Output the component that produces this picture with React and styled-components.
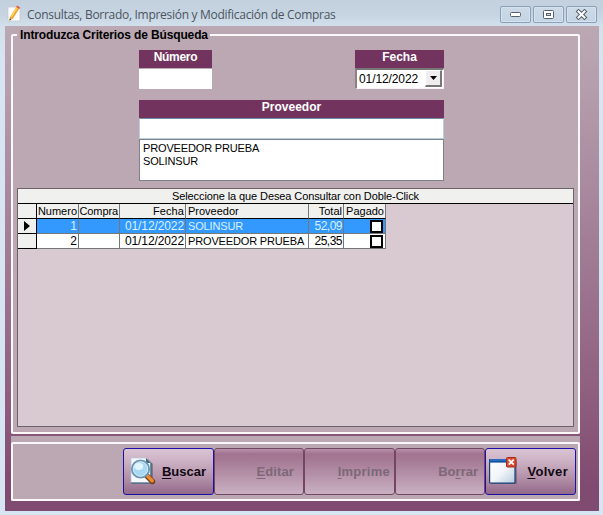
import React from 'react'
import styled, { createGlobalStyle } from 'styled-components'

const GlobalStyle = createGlobalStyle`
	* { box-sizing: border-box; }
	body {
		margin: 0;
		font-family: "Liberation Sans", Arial, sans-serif;
		font-size: 12px;
		color: #000;
		overflow: hidden;
	}
`

const Window = styled.div`
	width: 603px;
	height: 515px;
	padding: 0 4px 4px 5px;
	display: flex;
	flex-direction: column;
	background: linear-gradient(#c3d0de 0px, #c6d4e2 14px, #d2e0ec 26px, #d7e5f2 60px, #d7e5f2);
`

const TitleBar = styled.div`
	height: 26px;
	flex: none;
	display: flex;
	align-items: flex-start;
	padding: 5px 2px 0 2px;
`

const Title = styled.div`
	flex: 1;
	padding: 1px 0 0 6px;
	font-family: "Open Sans", "Noto Sans", sans-serif;
	font-size: 12px;
	line-height: 17px;
	letter-spacing: -0.29px;
	color: #4b5560;
	white-space: nowrap;
`

const WindowButtons = styled.div`
	display: flex;
	gap: 2px;
	padding-top: 1px;
`

const WindowButton = styled.div`
	width: 31px;
	height: 17px;
	display: flex;
	align-items: center;
	justify-content: center;
	border: 1px solid #8aa0b8;
	border-radius: 2px;
	background: linear-gradient(#cddae7, #c5d4e3);
	box-shadow: inset 0 0 0 1px #d6e2ee;
`

const Body = styled.div`
	flex: 1;
	padding: 1px 19px 10px 6px;
	display: flex;
	flex-direction: column;
	background: linear-gradient(#bba8b3 0px, #b59ead 60px, #8c5a7c 390px, #7f4b70 460px);
`

const Criteria = styled.fieldset`
	height: 407px;
	min-width: 0;
	margin: 0 0 2px;
	padding: 0 4px;
	border: 2px solid #fbf8fa;
	border-radius: 2px;
	background: #bba8b3;
`

const Legend = styled.legend`
	height: 16px;
	margin-left: 0;
	padding: 0 2px 0 3px;
	font-weight: bold;
	font-size: 12px;
	line-height: 16px;
	letter-spacing: -0.13px;
	white-space: nowrap;
`

const Fields = styled.div`
	width: 305px;
	height: 138px;
	margin: 7px 0 0 122px;
	display: flex;
	flex-direction: column;
`

const FieldRow = styled.div`
	display: flex;
	justify-content: space-between;
	margin-bottom: 11px;
`

const Field = styled.div`
	width: ${p => p.$width}px;
`

const Label = styled.div`
	height: 18px;
	background: #72345f;
	color: #fff;
	font-weight: bold;
	line-height: 15px;
	text-align: center;
	letter-spacing: ${p => p.$spacing || 0}px;
`

const Input = styled.div`
	height: 21px;
	background: #fff;
	border: 1px solid #b9d0e0;
	border-top-color: #6d8ca6;
`

const PlainInput = styled.div`
	height: 20px;
	margin-top: 1px;
	background: #fff;
`

const DateBox = styled.div`
	height: 21px;
	display: flex;
	justify-content: space-between;
	background: #fff;
	border: 1px solid #f7f3f5;
	border-top: 2px solid #777;
	border-left: 2px solid #8a8088;
	padding: 0 1px 1px 2px;
	line-height: 18px;
	letter-spacing: -0.1px;
`

const DropButton = styled.div`
	width: 17px;
	height: 17px;
	display: flex;
	align-items: center;
	justify-content: center;
	background: #efedee;
	border: 1px solid #fff;
	border-right: 2px solid #777;
	border-bottom: 2px solid #777;
`

const List = styled.div`
	height: 42px;
	padding: 2px 3px;
	background: #fff;
	border: 1px solid #7b828c;
	font-size: 11px;
	line-height: 13px;
	white-space: nowrap;
`

const Item = styled.div`
	letter-spacing: ${p => p.$spacing || 0}px;
`

const Grid = styled.div`
	width: 557px;
	height: 239px;
	background: #d9cad1;
	border: 1px solid #6b6168;
`

const GridCaption = styled.div`
	height: 15px;
	border-bottom: 1px solid #000;
	background: #f0f0ef;
	text-align: center;
	font-size: 11px;
	line-height: 15px;
	letter-spacing: ${p => p.$spacing || 0}px;
`

const Row = styled.div`
	width: 368px;
	height: 15px;
	display: grid;
	grid-template-columns: 19px 42px 41px 66px 123px 35px 42px;
	background: ${p => (p.$head ? '#f0f0ef' : p.$selected ? '#3399ff' : '#fff')};
	color: ${p => (p.$selected ? '#d9f2ff' : '#000')};
`

const Cell = styled.div`
	display: flex;
	align-items: center;
	justify-content: ${p => (p.$left ? 'flex-start' : 'flex-end')};
	padding: 0 1px 0 2px;
	border-right: 1px solid #777;
	border-bottom: 1px solid ${p => (p.$head ? '#000' : '#777')};
	font-size: ${p => (p.$head || p.$left ? 11 : 12)}px;
	line-height: 14px;
	letter-spacing: ${p => p.$spacing || 0}px;
	white-space: nowrap;
`

const Selector = styled.div`
	display: flex;
	align-items: center;
	justify-content: center;
	background: #f0f0ef;
	border-right: 1px solid #000;
	border-bottom: 1px solid #000;
`

const Check = styled.div`
	width: 13px;
	height: 13px;
	margin-right: 1px;
	background: #fff;
	border: 2px solid #000;
`

const Footer = styled.div`
	height: 65px;
	width: 569px;
	padding-top: 6px;
	background: #bba8b3;
`

const Actions = styled.div`
	height: 59px;
	padding: 4px 2px 0;
	display: flex;
	justify-content: flex-end;
	border: 2px solid #fbf8fa;
	border-radius: 2px;
`

const ActionButton = styled.div`
	width: ${p => p.$width}px;
	height: 47px;
	display: flex;
	align-items: center;
	justify-content: space-between;
	padding: 0 ${p => p.$right || 7}px 1px ${p => p.$pad || 6}px;
	border: 1px solid ${p => (p.$disabled ? '#744663' : '#1c10a8')};
	border-radius: 3px;
	background: ${p => (p.$disabled
		? 'linear-gradient(#b791aa 0, #a17390 5px, #a67b96 12px, #c9b0c2 100%)'
		: 'linear-gradient(#d9c3d2 0, #cfb5c7 10px, #b593aa 28px, #93698a 100%)')};
	color: ${p => (p.$disabled ? '#7d6778' : '#100814')};
	font-size: 13px;
	font-weight: bold;
	letter-spacing: ${p => p.$spacing || 0}px;
	span { margin-left: auto; }
	u { text-underline-offset: 2px; text-decoration-thickness: 1px; }
`

const NoteIcon = () => (
	<svg width="14" height="17" viewBox="0 0 14 17">
		<path d="M1 2h10l2 2v12H1z" fill="#fff" stroke="#c3c8cc" strokeWidth=".8" />
		<path d="M3 12L9.5 1.5l3 1.8L6 13.6l-3.6 1.8z" fill="#f3a62b" />
		<path d="M4.2 12L10.3 2" stroke="#ffe07a" strokeWidth="1.2" />
		<path d="M9.2 2l.9-1.4 3 1.8-.9 1.5z" fill="#d95f45" />
		<path d="M2.4 15.4l.4-2 1.6 1z" fill="#333" />
	</svg>
)

const SearchIcon = () => (
	<svg width="26" height="28" viewBox="0 0 26 28">
		<path d="M2 2h16l5 5v20H2z" fill="#5c4a60" opacity=".5" />
		<path d="M1 1h15l5 5v20H1z" fill="#f5f9fd" stroke="#b5c6d8" strokeWidth=".7" />
		<path d="M16 1l5 5h-5z" fill="#3c6686" />
		<path d="M1 26h20V6" fill="none" stroke="#27556f" strokeWidth="1.2" />
		<path d="M17 19l5.5 5.5" stroke="#7a3d1c" strokeWidth="5.4" strokeLinecap="round" />
		<path d="M17 18.5l5.2 5.2" stroke="#e88a2d" strokeWidth="3.6" strokeLinecap="round" />
		<circle cx="10.5" cy="12" r="8.6" fill="#a7d9f3" stroke="#6f96b5" strokeWidth="2" />
		<circle cx="10.5" cy="12" r="7.2" fill="none" stroke="#d5edf8" strokeWidth="1" />
		<ellipse cx="8.8" cy="9.5" rx="4.4" ry="3.4" fill="#e2f5fd" />
	</svg>
)

const CloseWindowIcon = () => (
	<svg width="29" height="28" viewBox="0 0 29 28">
		<defs>
			<linearGradient id="pane" x1="0" y1="0" x2="1" y2="1">
				<stop offset="0" stopColor="#fff" />
				<stop offset=".5" stopColor="#f2f6fa" />
				<stop offset="1" stopColor="#b9cbdc" />
			</linearGradient>
		</defs>
		<path d="M2 4h26v23H2z" fill="#57405a" opacity=".45" />
		<rect x=".6" y="2.6" width="25.4" height="23.6" rx="1" fill="url(#pane)" stroke="#153f79" strokeWidth="1.2" />
		<path d="M0 2h26v3.6H0z" fill="#1250a6" />
		<path d="M1 3h16" stroke="#4487cf" />
		<rect x="17.5" y=".5" width="9.5" height="9.5" rx="1" fill="#dc4a32" stroke="#a32a1b" />
		<path d="M19.7 2.7l5 5M24.7 2.7l-5 5" stroke="#fff" strokeWidth="1.7" />
	</svg>
)

const rows = [
	{ numero: 1, fecha: '01/12/2022', proveedor: 'SOLINSUR', total: '52,09', spacing: -0.15, selected: true },
	{ numero: 2, fecha: '01/12/2022', proveedor: 'PROVEEDOR PRUEBA', total: '25,35', spacing: -0.15 },
]

const App = () => (
	<>
		<GlobalStyle />
		<Window>
			<TitleBar>
				<NoteIcon />
				<Title>Consultas, Borrado, Impresión y Modificación de Compras</Title>
				<WindowButtons>
					<WindowButton>
						<svg width="11" height="5"><rect x=".5" y=".5" width="10" height="4" rx="1" fill="#fff" stroke="#555e6a" /></svg>
					</WindowButton>
					<WindowButton>
						<svg width="11" height="9">
							<rect x=".5" y=".5" width="10" height="8" rx="1" fill="#fff" stroke="#555e6a" />
							<rect x="3.5" y="3.5" width="4" height="2" fill="#d1dce8" stroke="#555e6a" />
						</svg>
					</WindowButton>
					<WindowButton>
						<svg width="13" height="11" viewBox="0 0 13 11">
							<path d="M3.5 2.5l6 6M9.5 2.5l-6 6" stroke="#555e6a" strokeWidth="4" strokeLinecap="square" />
							<path d="M3.5 2.5l6 6M9.5 2.5l-6 6" stroke="#fff" strokeWidth="2" strokeLinecap="square" />
						</svg>
					</WindowButton>
				</WindowButtons>
			</TitleBar>
			<Body>
				<Criteria>
					<Legend>Introduzca Criterios de Búsqueda</Legend>
					<Fields>
						<FieldRow>
							<Field $width={73}>
								<Label $spacing={-0.3}>Número</Label>
								<PlainInput />
							</Field>
							<Field $width={89}>
								<Label>Fecha</Label>
								<DateBox>
									01/12/2022
									<DropButton>
										<svg width="7" height="4"><path d="M0 0h7L3.5 4z" /></svg>
									</DropButton>
								</DateBox>
							</Field>
						</FieldRow>
						<Field $width={305}>
							<Label>Proveedor</Label>
							<Input />
							<List>
								<Item $spacing={-0.15}>PROVEEDOR PRUEBA</Item>
								<Item $spacing={-0.15}>SOLINSUR</Item>
							</List>
						</Field>
					</Fields>
					<Grid>
						<GridCaption $spacing={-0.1}>Seleccione la que Desea Consultar con Doble-Click</GridCaption>
						<Row $head>
							<Selector />
							<Cell $head>Numero</Cell>
							<Cell $head $spacing={-0.1}>Compra</Cell>
							<Cell $head $spacing={0.1}>Fecha</Cell>
							<Cell $head $left>Proveedor</Cell>
							<Cell $head>Total</Cell>
							<Cell $head>Pagado</Cell>
						</Row>
						{rows.map(row => (
							<Row key={row.numero} $selected={row.selected}>
								<Selector>
									{row.selected && <svg width="6" height="10"><path d="M0 0l6 5-6 5z" /></svg>}
								</Selector>
								<Cell>{row.numero}</Cell>
								<Cell />
								<Cell $spacing={-0.1}>{row.fecha}</Cell>
								<Cell $left $spacing={row.spacing}>{row.proveedor}</Cell>
								<Cell $spacing={-0.5}>{row.total}</Cell>
								<Cell><Check /></Cell>
							</Row>
						))}
					</Grid>
				</Criteria>
				<Footer>
					<Actions>
						<ActionButton $width={91}><SearchIcon /><span><u>B</u>uscar</span></ActionButton>
						<ActionButton $width={90} $disabled $right={9} $spacing={0.1}><span><u>E</u>ditar</span></ActionButton>
						<ActionButton $width={91} $disabled $right={4} $spacing={0.25}><span><u>I</u>mprime</span></ActionButton>
						<ActionButton $width={90} $disabled $right={6}><span>Bo<u>r</u>rar</span></ActionButton>
						<ActionButton $width={91} $pad={3} $spacing={0.3}><CloseWindowIcon /><span><u>V</u>olver</span></ActionButton>
					</Actions>
				</Footer>
			</Body>
		</Window>
	</>
)

export default App
